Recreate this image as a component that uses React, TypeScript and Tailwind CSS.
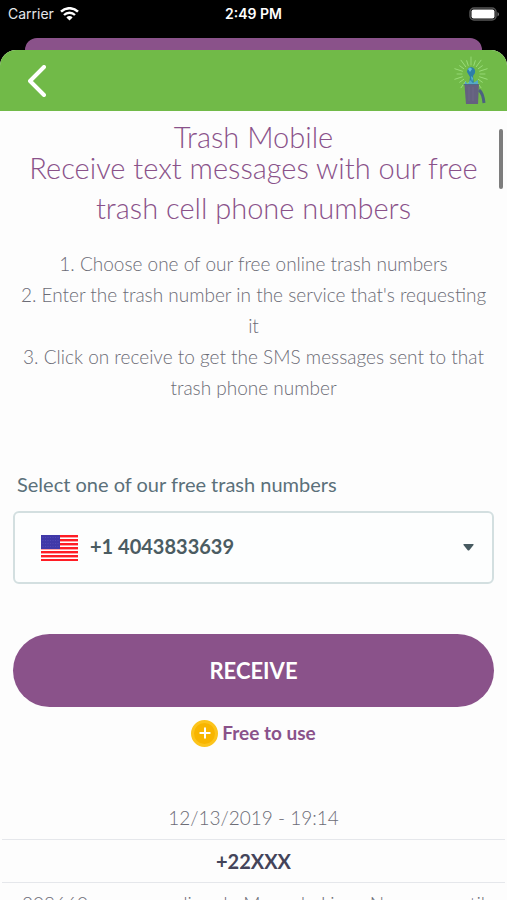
import { Plus } from "lucide-react";

const RAYS = Array.from({ length: 20 }, (_, i) => i * 18);
const STRIPES = [0, 1, 2, 3, 4, 5, 6];

const steps = [
  "1. Choose one of our free online trash numbers",
  "2. Enter the trash number in the service that's requesting it",
  "3. Click on receive to get the SMS messages sent to that trash phone number",
];

function StatusBar() {
  return (
    <div className="grid h-7 grid-cols-3 items-center px-2 font-['Inter',sans-serif] text-sm text-white">
      <div className="flex items-center gap-1.5 text-gray-200">
        <span>Carrier</span>
        <svg width="19" height="14" viewBox="0 0 19 14" fill="none">
          <path d="M1 4.6a12.3 12.3 0 0 1 17 0" stroke="white" strokeWidth="2.5" />
          <path d="M4 8a8 8 0 0 1 11 0" stroke="white" strokeWidth="2.4" />
          <path d="M6.4 10.4a4.4 4.4 0 0 1 6.2 0L9.5 13.6z" fill="white" />
        </svg>
      </div>
      <span className="text-center font-semibold">2:49 PM</span>
      <svg className="justify-self-end" width="30" height="14" viewBox="0 0 30 14" fill="none">
        <rect x="1" y="1" width="26" height="12" rx="4" stroke="#555" strokeWidth="1.5" />
        <rect x="2.5" y="2.5" width="23" height="9" rx="2" fill="white" />
        <path d="M28.5 5v4.5q1.5-.6 1.5-2.2T28.5 5z" fill="#777" />
      </svg>
    </div>
  );
}

function Logo() {
  return (
    <svg width="36" height="50" viewBox="0 0 36 50" fill="none" aria-label="Trash Mobile">
      <g stroke="#9fe07f" strokeWidth="0.8" strokeLinecap="round">
        {RAYS.map((angle) => (
          <line key={angle} x1="18" y1="9" x2="18" y2={angle % 36 ? 4 : 1} transform={`rotate(${angle} 18 18)`} />
        ))}
      </g>
      <path d="M18 11q5 1 4 6l-2 3 1 8h-5l1-7-3-5q0-4 4-5z" fill="#2d7fa8" />
      <path d="M15 13q2-3 4 0l-2 3zM18 20l2 2-1 4z" fill="#62b8d8" />
      <path d="M12 25l3 3 2-4 3 3 5-3v5H12z" fill="#55a9c8" />
      <path d="M11.5 29l14.5-1-1 20H13z" fill="#64617f" />
      <path d="M10.5 28.5h15" stroke="#4f6a88" strokeWidth="1.2" />
      <path d="M16 31v14M20 31v14" stroke="#706a8a" strokeWidth="0.8" />
      <path d="M26 34q4 3 5 13" stroke="#4c6180" strokeWidth="3" />
    </svg>
  );
}

function Flag() {
  return (
    <svg width="37" height="26" viewBox="0 0 37 26" aria-hidden="true">
      <rect width="37" height="26" fill="#fff" />
      {STRIPES.map((i) => (
        <rect key={i} y={i * 4} width="37" height="2.4" fill="#ff1d25" />
      ))}
      <rect width="19" height="14" fill="#4038a8" />
      <path
        d="M1.5 2.5h16M1.5 5.5h16M1.5 8.5h16M1.5 11.5h16"
        stroke="#554eb8"
        strokeWidth="0.8"
        strokeDasharray="1 1.5"
      />
    </svg>
  );
}

export default function App() {
  return (
    <div className="h-dvh overflow-hidden bg-black font-[Lato,sans-serif]">
      <StatusBar />
      <div className="mx-[25px] mt-2.5 h-3 rounded-t-xl bg-[#8a528a]" />

      <div className="relative h-full overflow-hidden rounded-t-2xl bg-[#fdfdfd]">
        <header className="flex h-[61px] items-center justify-between bg-[#71ba48] pr-[18px] pl-6">
          <button type="button" aria-label="Back" className="p-1">
            <svg width="18" height="32" viewBox="0 0 18 32" fill="none">
              <path
                d="M16 2L2 16l14 14"
                stroke="white"
                strokeWidth="4"
                strokeLinecap="round"
                strokeLinejoin="round"
              />
            </svg>
          </button>
          <Logo />
        </header>
        <div className="absolute top-[79px] right-1 h-15 w-1 rounded-full bg-[#7d7d7d]" />

        <main className="px-[13px] pt-[15px]">
          <div className="text-center text-[29px] font-light text-[#8a528a]">
            <h1 className="leading-[22px]">Trash Mobile</h1>
            <h2 className="leading-10">Receive text messages with our free trash cell phone numbers</h2>
          </div>

          <div className="mt-5 text-center text-[19px] leading-[31px] font-light text-[#6c6c76]">
            {steps.map((step) => (
              <p key={step}>{step}</p>
            ))}
          </div>

          <label htmlFor="number" className="mt-[66px] block px-1 text-xl leading-[30px] text-[#5b707a]">
            Select one of our free trash numbers
          </label>
          <div className="relative mt-3 flex items-center">
            <select
              id="number"
              className="h-[73px] w-full appearance-none rounded-md border-2 border-[#d3dfe0] bg-[#fdfefe] pr-12 pb-1 pl-[75px] text-xl font-bold text-[#4b5c62]"
            >
              <option>+1 4043833639</option>
            </select>
            <span className="pointer-events-none absolute left-7">
              <Flag />
            </span>
            <svg className="pointer-events-none absolute right-5" width="11" height="7" viewBox="0 0 11 7">
              <path d="M1 0h9q1 0 .5 1L6.5 6q-1 1-2 0L.5 1Q0 0 1 0z" fill="#475a60" />
            </svg>
          </div>

          <button
            type="button"
            className="mt-[50px] h-[73px] w-full rounded-full bg-[#8a528a] text-[22px] font-bold text-white"
          >
            RECEIVE
          </button>
          <p className="mt-3 flex items-center justify-center gap-1 text-[19px] leading-7 font-bold text-[#8a528a]">
            <span className="flex size-[27px] items-center justify-center rounded-full border-3 border-[#fcc41c] bg-[#f8b500]">
              <Plus size={16} strokeWidth={3} color="white" />
            </span>
            Free to use
          </p>
        </main>

        <section className="mt-[50px] px-0.5 text-center text-[19px] leading-[42px]">
          <p className="border-b border-gray-200 font-light text-[#6c6c76]">12/13/2019 - 19:14</p>
          <p className="border-b border-gray-200 text-xl leading-[42px] font-bold text-[#44445a]">+22XXX</p>
          <p className="font-light whitespace-nowrap text-[#6c6c76]">
            208660 e o seu codigo do Mercado Livre. Nao compartil
          </p>
        </section>
      </div>
    </div>
  );
}
